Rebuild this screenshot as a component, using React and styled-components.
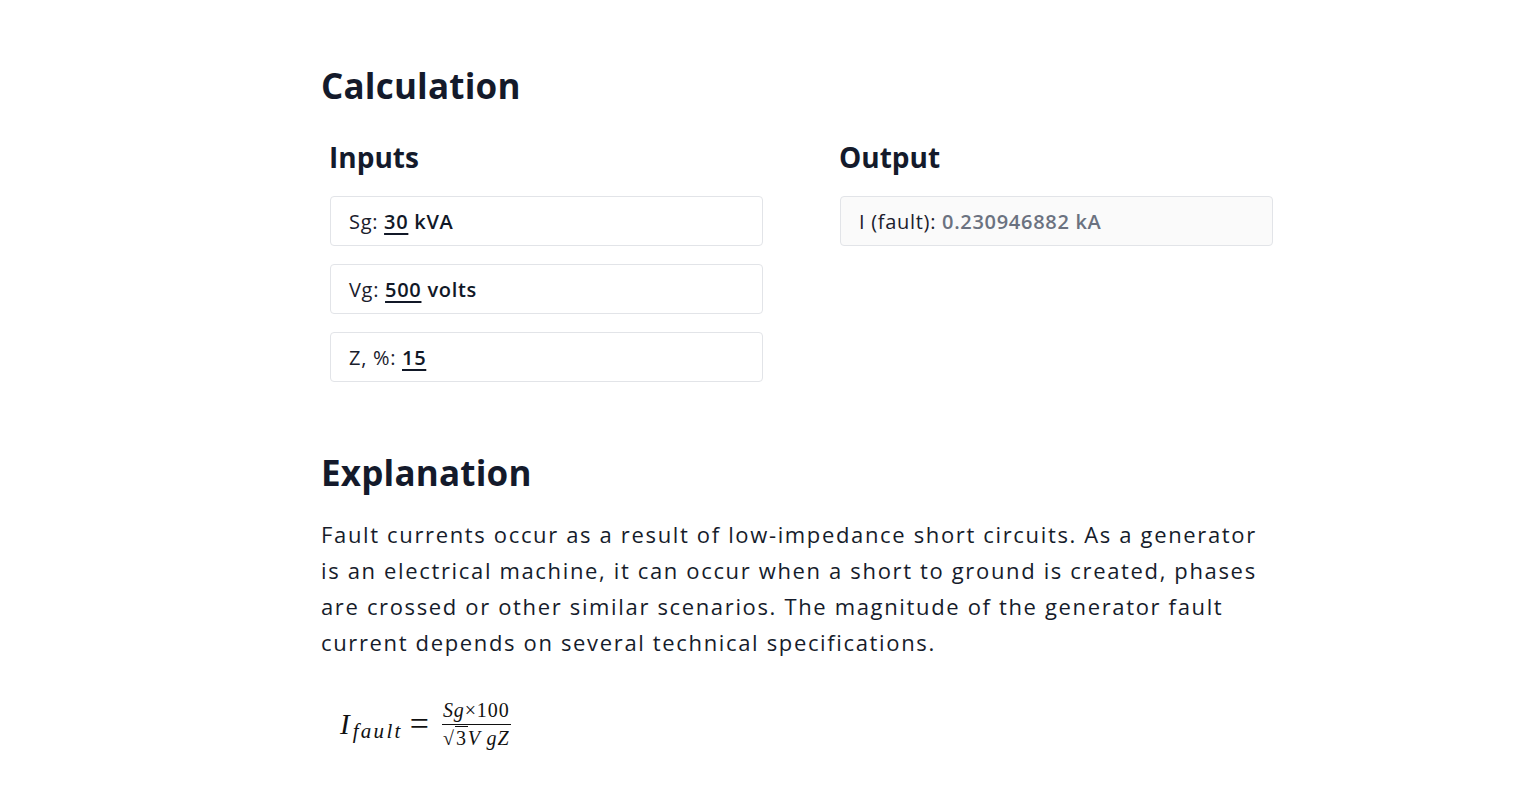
import React from "react";
import styled, { createGlobalStyle } from "styled-components";

const Global = createGlobalStyle`
  html, body { margin: 0; padding: 0; background: #ffffff; }
  body { font-family: "Open Sans", "Noto Sans", sans-serif; color: #1a202c; }
`;

const Page = styled.main`
  padding: 64px 0 40px 321px;
  width: 951px;
`;

const H2 = styled.h2`
  margin: 0;
  font-size: 35px;
  line-height: 44px;
  font-weight: 700;
  color: #141a2b;
  letter-spacing: 0.2px;
`;

const H3 = styled.h3`
  margin: 0 0 21px;
  font-size: 28px;
  line-height: 36px;
  font-weight: 700;
  color: #141a2b;
`;

const Columns = styled.section`
  display: grid;
  grid-template-columns: 434px 434px;
  column-gap: 76px;
  padding-left: 8px;
  margin-top: 31px;
`;

const Column = styled.div`
  display: flex;
  flex-direction: column;
`;

const FieldList = styled.div`
  display: flex;
  flex-direction: column;
  gap: 18px;
  padding-left: 1px;
`;

const Field = styled.div`
  box-sizing: border-box;
  height: 50px;
  display: flex;
  align-items: center;
  padding: 0 18px;
  border: 1px solid #e2e4e8;
  border-radius: 4px;
  background: ${(p) => (p.$readonly ? "#fafafa" : "#ffffff")};
  font-size: 20px;
  letter-spacing: 0.7px;
  color: #1a202c;
`;

const Label = styled.span`
  white-space: pre;
`;

const Value = styled.span`
  font-weight: 600;
  color: #111827;
  text-decoration: ${(p) => (p.$underline ? "underline" : "none")};
  text-underline-offset: 4px;
  text-decoration-thickness: 2px;
`;

const Result = styled.span`
  font-weight: 600;
  color: #6b7280;
`;

const Explanation = styled.section`
  margin-top: 69px;
`;

const Paragraph = styled.p`
  margin: 21px 0 0;
  font-size: 22px;
  line-height: 36px;
  color: #161c2b;
  letter-spacing: 1.65px;
`;

const Formula = styled.div`
  margin-top: 40px;
  padding-left: 19px;
  display: flex;
  align-items: center;
  font-family: "Liberation Serif", "DejaVu Serif", serif;
  color: #111;
`;

const MathI = styled.span`
  font-style: italic;
  font-size: 29px;
`;

const Sub = styled.span`
  font-style: italic;
  font-size: 21px;
  letter-spacing: 2.3px;
  position: relative;
  top: 7px;
  margin-left: 3px;
`;

const Eq = styled.span`
  font-size: 34px;
  line-height: 34px;
  margin: 0 13px 0 7px;
`;

const Frac = styled.span`
  display: inline-flex;
  flex-direction: column;
  align-items: center;
  font-size: 20px;
  line-height: 20px;
  letter-spacing: 0.9px;
`;

const Num = styled.span`
  font-style: italic;
  padding: 0 1px 4px;
  & > b { font-style: normal; font-weight: normal; }
`;

const Bar = styled.span`
  align-self: stretch;
  height: 1px;
  background: #111;
  margin-bottom: 3px;
`;

const Den = styled.span`
  font-style: italic;
`;

const Sqrt = styled.span`
  font-style: normal;
  & > span { border-top: 1px solid #111; padding: 0 1px; }
`;

export default function App() {
  return (
    <>
      <Global />
      <Page>
        <H2>Calculation</H2>
        <Columns>
          <Column>
            <H3>Inputs</H3>
            <FieldList>
              <Field>
                <Label>
                  Sg: <Value $underline>30</Value> <Value>kVA</Value>
                </Label>
              </Field>
              <Field>
                <Label>
                  Vg: <Value $underline>500</Value> <Value>volts</Value>
                </Label>
              </Field>
              <Field>
                <Label>
                  Z, %: <Value $underline>15</Value>
                </Label>
              </Field>
            </FieldList>
          </Column>
          <Column>
            <H3>Output</H3>
            <FieldList>
              <Field $readonly>
                <Label>
                  I (fault): <Result>0.230946882 kA</Result>
                </Label>
              </Field>
            </FieldList>
          </Column>
        </Columns>
        <Explanation>
          <H2>Explanation</H2>
          <Paragraph>
            Fault currents occur as a result of low-impedance short circuits. As a generator
            is an electrical machine, it can occur when a short to ground is created, phases
            are crossed or other similar scenarios. The magnitude of the generator fault
            current depends on several technical specifications.
          </Paragraph>
          <Formula>
            <MathI>I</MathI>
            <Sub>fault</Sub>
            <Eq>=</Eq>
            <Frac>
              <Num>
                Sg<b>×100</b>
              </Num>
              <Bar />
              <Den>
                <Sqrt>
                  √<span>3</span>
                </Sqrt>
                V gZ
              </Den>
            </Frac>
          </Formula>
        </Explanation>
      </Page>
    </>
  );
}
